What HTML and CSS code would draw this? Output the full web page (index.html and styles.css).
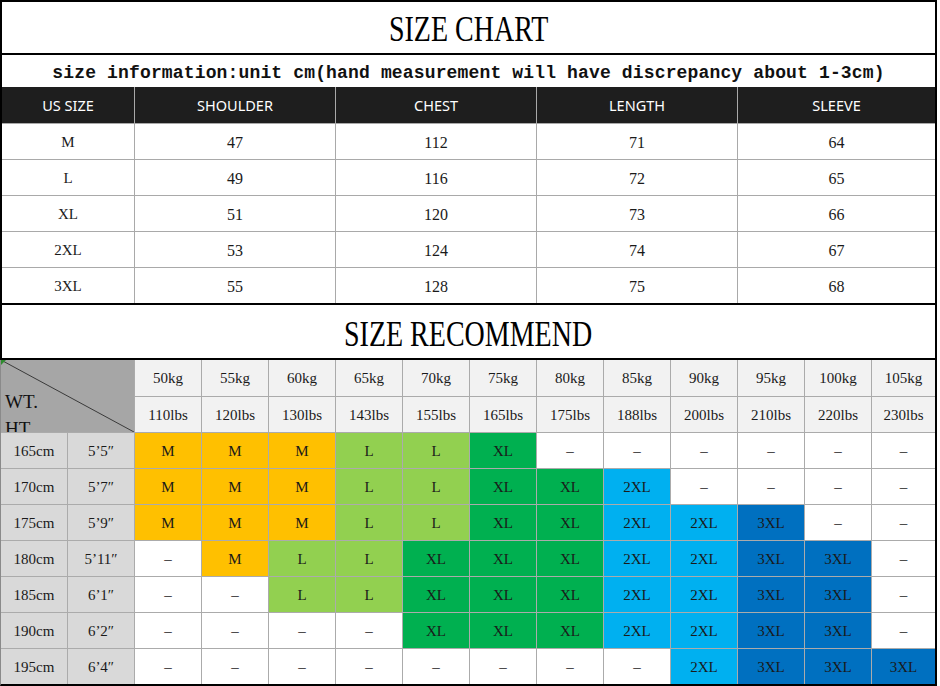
FILE: index.html
```html
<!DOCTYPE html>
<html lang="en">
<head>
<meta charset="utf-8">
<title>Size Chart</title>
<link rel="stylesheet" href="styles.css">
</head>
<body>
<div class="sheet">
  <section class="chart">
    <h1 class="title"><span class="title-text">SIZE CHART</span></h1>
    <div class="info">size information:unit cm(hand measurement will have discrepancy about 1-3cm)</div>
    <div class="size-table">
      <div class="th">US SIZE</div><div class="th">SHOULDER</div><div class="th">CHEST</div><div class="th">LENGTH</div><div class="th">SLEEVE</div>
      <div class="td lbl">M</div><div class="td">47</div><div class="td">112</div><div class="td">71</div><div class="td">64</div>
      <div class="td lbl">L</div><div class="td">49</div><div class="td">116</div><div class="td">72</div><div class="td">65</div>
      <div class="td lbl">XL</div><div class="td">51</div><div class="td">120</div><div class="td">73</div><div class="td">66</div>
      <div class="td lbl">2XL</div><div class="td">53</div><div class="td">124</div><div class="td">74</div><div class="td">67</div>
      <div class="td lbl">3XL</div><div class="td">55</div><div class="td">128</div><div class="td">75</div><div class="td">68</div>
    </div>
  </section>
  <section class="recommend">
    <h2 class="title rec-title"><span class="title-text">SIZE RECOMMEND</span></h2>
    <div class="rec-grid">
      <div class="corner">
        <svg class="diag" viewBox="0 0 100 100" preserveAspectRatio="none"><line x1="0" y1="0" x2="100" y2="100" vector-effect="non-scaling-stroke"/></svg>
        <span class="marker"></span>
        <div class="corner-text">WT.<br>HT</div>
      </div>
      <div class="wt">50kg</div><div class="wt">55kg</div><div class="wt">60kg</div><div class="wt">65kg</div><div class="wt">70kg</div><div class="wt">75kg</div><div class="wt">80kg</div><div class="wt">85kg</div><div class="wt">90kg</div><div class="wt">95kg</div><div class="wt">100kg</div><div class="wt">105kg</div>
      <div class="wt">110lbs</div><div class="wt">120lbs</div><div class="wt">130lbs</div><div class="wt">143lbs</div><div class="wt">155lbs</div><div class="wt">165lbs</div><div class="wt">175lbs</div><div class="wt">188lbs</div><div class="wt">200lbs</div><div class="wt">210lbs</div><div class="wt">220lbs</div><div class="wt">230lbs</div>

      <div class="ht">165cm</div><div class="ht">5’5″</div>
      <div class="c m">M</div><div class="c m">M</div><div class="c m">M</div><div class="c l">L</div><div class="c l">L</div><div class="c xl">XL</div><div class="c n">–</div><div class="c n">–</div><div class="c n">–</div><div class="c n">–</div><div class="c n">–</div><div class="c n">–</div>

      <div class="ht">170cm</div><div class="ht">5’7″</div>
      <div class="c m">M</div><div class="c m">M</div><div class="c m">M</div><div class="c l">L</div><div class="c l">L</div><div class="c xl">XL</div><div class="c xl">XL</div><div class="c x2">2XL</div><div class="c n">–</div><div class="c n">–</div><div class="c n">–</div><div class="c n">–</div>

      <div class="ht">175cm</div><div class="ht">5’9″</div>
      <div class="c m">M</div><div class="c m">M</div><div class="c m">M</div><div class="c l">L</div><div class="c l">L</div><div class="c xl">XL</div><div class="c xl">XL</div><div class="c x2">2XL</div><div class="c x2">2XL</div><div class="c x3">3XL</div><div class="c n">–</div><div class="c n">–</div>

      <div class="ht">180cm</div><div class="ht">5’11″</div>
      <div class="c n">–</div><div class="c m">M</div><div class="c l">L</div><div class="c l">L</div><div class="c xl">XL</div><div class="c xl">XL</div><div class="c xl">XL</div><div class="c x2">2XL</div><div class="c x2">2XL</div><div class="c x3">3XL</div><div class="c x3">3XL</div><div class="c n">–</div>

      <div class="ht">185cm</div><div class="ht">6’1″</div>
      <div class="c n">–</div><div class="c n">–</div><div class="c l">L</div><div class="c l">L</div><div class="c xl">XL</div><div class="c xl">XL</div><div class="c xl">XL</div><div class="c x2">2XL</div><div class="c x2">2XL</div><div class="c x3">3XL</div><div class="c x3">3XL</div><div class="c n">–</div>

      <div class="ht">190cm</div><div class="ht">6’2″</div>
      <div class="c n">–</div><div class="c n">–</div><div class="c n">–</div><div class="c n">–</div><div class="c xl">XL</div><div class="c xl">XL</div><div class="c xl">XL</div><div class="c x2">2XL</div><div class="c x2">2XL</div><div class="c x3">3XL</div><div class="c x3">3XL</div><div class="c n">–</div>

      <div class="ht">195cm</div><div class="ht">6’4″</div>
      <div class="c n">–</div><div class="c n">–</div><div class="c n">–</div><div class="c n">–</div><div class="c n">–</div><div class="c n">–</div><div class="c n">–</div><div class="c n">–</div><div class="c x2">2XL</div><div class="c x3">3XL</div><div class="c x3">3XL</div><div class="c x3">3XL</div>
    </div>
  </section>
</div>
</body>
</html>
```
FILE: styles.css
```css
* { box-sizing: border-box; }
html, body { margin: 0; padding: 0; background: #fff; }
body { font-family: "Liberation Serif", serif; color: #1a1a1a; }

.sheet {
  width: 937px;
  height: 686px;
  overflow: hidden;
}

.chart {
  border-top: 2px solid #000;
  border-left: 2px solid #000;
  border-right: 2px solid #000;
}

.title {
  margin: 0;
  height: 53px;
  border-bottom: 2px solid #000;
  display: flex;
  align-items: center;
  justify-content: center;
  font-family: "Liberation Serif", serif;
  font-weight: normal;
  font-size: 35px;
  color: #000;
  padding-top: 5px;
}
.title-text {
  display: inline-block;
  transform: scaleX(0.8);
  white-space: nowrap;
}

.info {
  height: 32px;
  line-height: 36px;
  text-align: center;
  font-family: "Liberation Mono", monospace;
  font-weight: bold;
  font-size: 18px;
  letter-spacing: 0.15px;
  color: #111;
  white-space: nowrap;
}

.size-table {
  display: grid;
  grid-template-columns: 132px repeat(3, 200px) 1fr;
  grid-template-rows: 36px repeat(5, 35px);
  gap: 1px;
  background: #a9a9a9;
}
.th {
  background: #1e1e1e;
  color: #fff;
  font-family: "Noto Sans", sans-serif;
  font-size: 14.5px;
  display: flex;
  align-items: center;
  justify-content: center;
}
.td {
  background: #fff;
  display: flex;
  align-items: center;
  justify-content: center;
  font-size: 16px;
  padding-top: 2px;
}
.td.lbl {
  font-size: 15px;
}

.rec-title {
  height: 57px;
  border-top: 2px solid #000;
  border-left: 2px solid #000;
  border-right: 2px solid #000;
  border-bottom: 2px solid #000;
  padding-top: 7px;
}

.rec-grid {
  display: grid;
  grid-template-columns: repeat(13, 66px) 1fr;
  grid-template-rows: 36px repeat(8, 35px);
  gap: 1px;
  background: #ababab;
  border-left: 1px solid #8a8a8a;
  border-right: 2px solid #000;
  border-bottom: 2px solid #000;
}

.rec-grid > div {
  display: flex;
  align-items: center;
  justify-content: center;
  font-size: 15px;
  padding-top: 1px;
}

.corner {
  grid-column: 1 / 3;
  grid-row: 1 / 3;
  background: #a6a6a6;
  position: relative;
  overflow: hidden;
}
.rec-grid > .corner {
  display: block;
  padding-top: 0;
}
.diag {
  position: absolute;
  left: 0;
  top: 0;
  width: 100%;
  height: 100%;
}
.diag line {
  stroke: #3a3a3a;
  stroke-width: 1;
}
.marker {
  position: absolute;
  left: 0;
  top: 0;
  width: 0;
  height: 0;
  border-top: 5px solid #2e8b2e;
  border-right: 5px solid transparent;
}
.corner-text {
  padding: 28px 0 0 4px;
  font-size: 19px;
  line-height: 27px;
  color: #111;
}

.wt { background: #f2f2f2; }
.ht { background: #d9d9d9; }
.c { background: #fff; color: #1a1a1a; }
.m { background: #ffc000; }
.l { background: #92d050; }
.xl { background: #00b050; }
.x2 { background: #00b0f0; }
.x3 { background: #0070c0; }
.n { background: #fff; }
```
